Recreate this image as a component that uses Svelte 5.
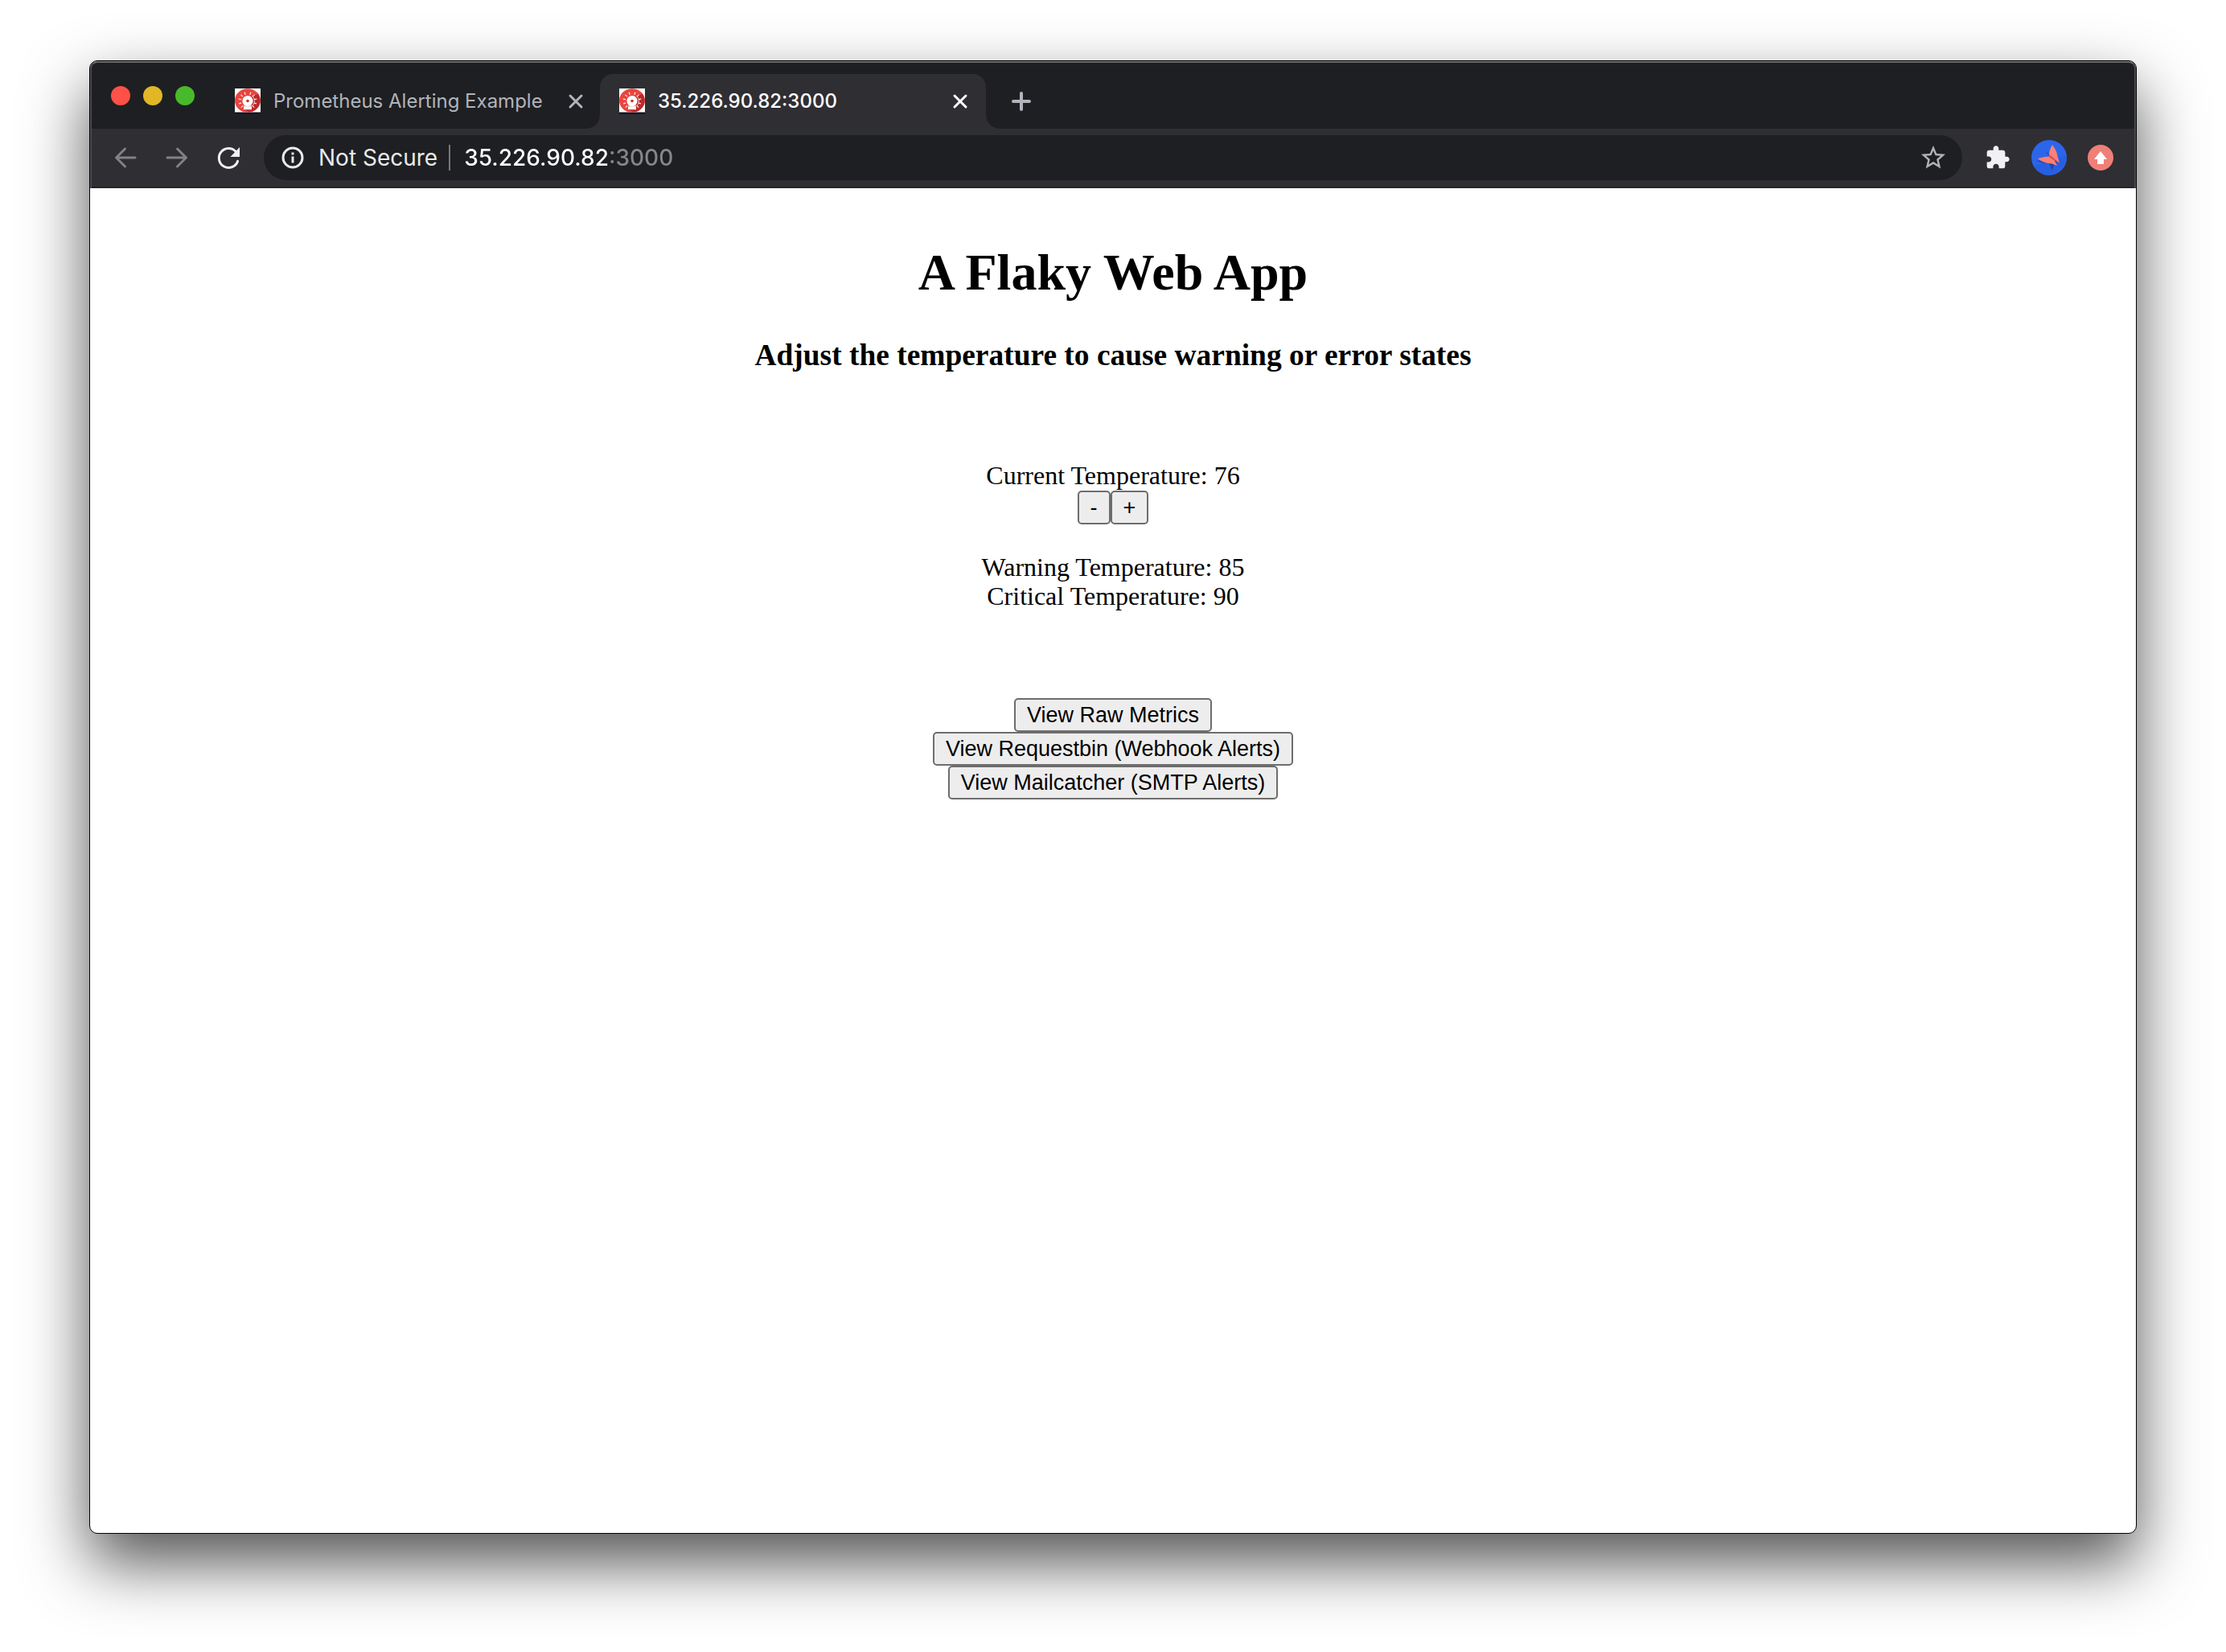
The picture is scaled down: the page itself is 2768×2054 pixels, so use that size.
<script>
  let temperature = $state(76);
  let address = $state('35.226.90.82:3000');
  const warning = 85;
  const critical = 90;
  const rays = [-135, -108, -78, -48, -20, 20, 48, 78, 108, 135];
</script>

{#snippet favicon()}
  <svg class="favicon" viewBox="0 0 32 32" aria-hidden="true">
    <rect width="32" height="32" fill="#14142a" />
    <rect width="32" height="29.5" fill="#fff" />
    <ellipse cx="16" cy="15" rx="16" ry="14.8" fill="#e8463f" />
    <path d="M21 9 L29 7 A16 14.8 0 0 1 18 29.6 L11 26 Z" fill="#b92a2c" />
    {#each rays as angle}
      <path d="M16 4.4v2.4" transform="rotate({angle} 16 15.5)" stroke="#ffe9e6" stroke-width="1.2" stroke-linecap="round" />
    {/each}
    <rect x="11" y="21" width="10" height="5.2" fill="#fff" />
    <path d="M10.5 21.8h11" stroke="#d9403b" stroke-width="0.7" />
    <path d="M21.500 9a8.500 8.500 0 0 1 0 13" fill="none" stroke="#ffe9e6" stroke-width="0.8" />
    <circle cx="16" cy="15.5" r="6.6" fill="#fff" />
    <circle cx="16" cy="15.5" r="1.8" fill="#c9302c" />
  </svg>
{/snippet}

{#snippet cross()}
  <svg width="24" height="24" viewBox="0 0 24 24" aria-hidden="true">
    <path d="M5 5 19 19M19 5 5 19" stroke="currentColor" stroke-width="3" stroke-linecap="round" />
  </svg>
{/snippet}

<div class="desktop">
  <div class="window">
    <header class="chrome">
      <div class="tabstrip">
        <div class="lights">
          <button class="light red" aria-label="Close window"></button>
          <button class="light yellow" aria-label="Minimize window"></button>
          <button class="light green" aria-label="Zoom window"></button>
        </div>
        <div class="tab">
          {@render favicon()}
          <span class="title">Prometheus Alerting Example</span>
          <button class="icon small" aria-label="Close tab">{@render cross()}</button>
        </div>
        <div class="tab active">
          {@render favicon()}
          <span class="title">35.226.90.82:3000</span>
          <button class="icon small" aria-label="Close tab">{@render cross()}</button>
        </div>
        <button class="icon newtab" aria-label="New tab">
          <svg width="40" height="40" viewBox="0 0 40 40" aria-hidden="true">
            <path d="M20 10v20M10 20h20" stroke="currentColor" stroke-width="4" stroke-linecap="round" />
          </svg>
        </button>
      </div>

      <div class="toolbar">
        <button class="icon dim" aria-label="Back">
          <svg width="40" height="40" viewBox="0 0 40 40" fill="none" aria-hidden="true">
            <path d="M32 20H9M19.5 9 8.5 20l11 11" stroke="currentColor" stroke-width="3" stroke-linecap="round" stroke-linejoin="round" />
          </svg>
        </button>
        <button class="icon dim" aria-label="Forward">
          <svg width="40" height="40" viewBox="0 0 40 40" fill="none" aria-hidden="true">
            <path d="M8 20h23M20.5 9l11 11-11 11" stroke="currentColor" stroke-width="3" stroke-linecap="round" stroke-linejoin="round" />
          </svg>
        </button>
        <button class="icon" aria-label="Reload">
          <svg width="40" height="40" viewBox="0 0 40 40" fill="none" aria-hidden="true">
            <path d="M31.6 24.4A12 12 0 1 1 29 12.2" stroke="currentColor" stroke-width="3" stroke-linecap="round" />
            <path d="M34 7v12H22.5z" fill="currentColor" />
          </svg>
        </button>

        <div class="omnibox">
          <svg width="40" height="40" viewBox="0 0 40 40" fill="none" aria-hidden="true">
            <circle cx="20" cy="20" r="12" stroke="currentColor" stroke-width="3" />
            <path d="M18.5 13.5h3v3h-3zM18.5 18.5h3v8h-3z" fill="currentColor" />
          </svg>
          <span class="secure">Not Secure</span>
          <span class="divider"></span>
          <input class="url" type="text" aria-label="Address" spellcheck="false" bind:value={address} />
          <button class="star" aria-label="Bookmark this page">
            <svg width="36" height="36" viewBox="0 0 24 24" fill="currentColor" aria-hidden="true">
              <path d="M22 9.24l-7.19-.62L12 2 9.19 8.63 2 9.24l5.46 4.73L5.82 21 12 17.27 18.18 21l-1.63-7.03L22 9.24zM12 15.4l-3.76 2.27 1-4.28-3.32-2.88 4.38-.38L12 6.1l1.71 4.04 4.38.38-3.32 2.88 1 4.28L12 15.4z" />
            </svg>
          </button>
        </div>

        <button class="icon" aria-label="Extensions">
          <svg width="32" height="32" viewBox="0 0 24 24" fill="currentColor" aria-hidden="true">
            <path d="M20.5 11H19V7c0-1.1-.9-2-2-2h-4V3.5C13 2.12 11.88 1 10.5 1S8 2.12 8 3.5V5H4c-1.1 0-1.99.9-1.99 2v3.8H3.5c1.49 0 2.7 1.21 2.7 2.7s-1.21 2.7-2.7 2.7H2V20c0 1.1.9 2 2 2h3.8v-1.5c0-1.49 1.21-2.7 2.7-2.7 1.49 0 2.7 1.21 2.7 2.7V22H17c1.1 0 2-.9 2-2v-4h1.5c1.38 0 2.5-1.12 2.5-2.5S21.88 11 20.5 11z" />
          </svg>
        </button>
        <button class="icon" aria-label="Profile">
          <svg width="44" height="44" viewBox="0 0 44 44" aria-hidden="true">
            <circle cx="22" cy="22" r="22" fill="#2b66ea" />
            <path d="M4 32 43 19A22 22 0 0 1 7 38z" fill="#275ee2" />
            <path d="M18 14l4 7-2 4-15 1 12 3 5 0 4 9 2-7 4-4z" fill="#1f479f" />
            <path d="M26 6Q32 14 32.500 20.500L35 28.500 29 25 21.500 22.500Q22 12 26 6z" fill="#fc817a" />
            <path d="M8 23.300Q16 20.500 22 20.800L28.500 25 32 32 25.500 29.500Q14 28.500 8 23.300z" fill="#fc7f77" />
            <path d="M22 18 26 21 35 28.500 28.500 25.500 22 21.500z" fill="#e04f4c" />
          </svg>
        </button>
        <button class="icon" aria-label="Update available">
          <svg width="32" height="32" viewBox="0 0 32 32" aria-hidden="true">
            <circle cx="16" cy="16" r="16" fill="#f07f78" />
            <path d="M16 8 24 18h-4v6h-8v-6H8z" fill="#fff" />
          </svg>
        </button>
      </div>
    </header>

    <main class="page">
      <h1>A Flaky Web App</h1>
      <h3>Adjust the temperature to cause warning or error states</h3>

      <section class="current">
        <p>Current Temperature: {temperature}</p>
        <div class="steps">
          <button class="push" aria-label="Decrease temperature" onclick={() => temperature--}>-</button>
          <button class="push" aria-label="Increase temperature" onclick={() => temperature++}>+</button>
        </div>
      </section>

      <section class="limits">
        <p>Warning Temperature: {warning}</p>
        <p>Critical Temperature: {critical}</p>
      </section>

      <nav class="links">
        <button class="push">View Raw Metrics</button>
        <button class="push">View Requestbin (Webhook Alerts)</button>
        <button class="push">View Mailcatcher (SMTP Alerts)</button>
      </nav>
    </main>
  </div>
</div>

<style>
  :global(body) {
    background: #fff;
  }

  .desktop {
    box-sizing: border-box;
    min-height: 100vh;
    padding: 75px 111px 147px;
    display: flex;
    flex-direction: column;
    overflow: hidden;
  }

  .window {
    flex: 1;
    display: flex;
    flex-direction: column;
    border: 1px solid #000;
    border-radius: 10px;
    background: #fff;
    box-shadow: 0 36px 80px rgba(0, 0, 0, 0.68);
  }

  .chrome {
    position: relative;
    border-radius: 9px 9px 0 0;
    background: #1e1f22;
    color: #f1f1f4;
    font-family: Inter, "Liberation Sans", sans-serif;
    overflow: hidden;
  }

  /* Light rim along the top and side edges of the title bar */
  .chrome::after {
    content: "";
    position: absolute;
    inset: 0;
    border: 2px solid #4a4a4d;
    border-top-color: #6a6b6c;
    border-bottom: 0;
    border-radius: 9px 9px 0 0;
    pointer-events: none;
  }

  button {
    margin: 0;
    padding: 0;
    border: 0;
    background: none;
    color: inherit;
    font: inherit;
  }

  .tabstrip {
    display: flex;
    align-items: flex-end;
    height: 84px;
  }

  .lights {
    display: flex;
    align-items: center;
    gap: 16px;
    height: 82px;
    padding: 2px 26px 0;
    align-self: flex-start;
  }

  .light {
    width: 24px;
    height: 24px;
    border-radius: 50%;
  }

  .red {
    background: #ff5148;
  }

  .yellow {
    background: #e1b725;
  }

  .green {
    background: #48b92a;
  }

  .tab {
    box-sizing: border-box;
    position: relative;
    display: flex;
    align-items: center;
    width: 478px;
    height: 68px;
    padding: 0 18px 0 24px;
    color: #b1b4bb;
    font-size: 24px;
    line-height: 32px;
  }

  .active {
    width: 480px;
    padding-right: 20px;
    border-radius: 16px 16px 0 0;
    background: #2f2e33;
    color: #fff;
    font-weight: 500;
  }

  /* Curved feet where the active tab meets the toolbar */
  .active::before,
  .active::after {
    content: "";
    position: absolute;
    bottom: 0;
    width: 16px;
    height: 16px;
  }

  .active::before {
    right: 100%;
    background: radial-gradient(circle at 0 0, transparent 15px, #2f2e33 16px);
  }

  .active::after {
    left: 100%;
    background: radial-gradient(circle at 100% 0, transparent 15px, #2f2e33 16px);
  }

  .favicon {
    flex: none;
    width: 32px;
    height: 32px;
  }

  .title {
    flex: 1;
    margin-left: 16px;
    white-space: nowrap;
  }

  .icon {
    flex: none;
    display: flex;
    align-items: center;
    justify-content: center;
    width: 40px;
    height: 40px;
  }

  .icon svg {
    flex: none;
  }

  .small {
    width: 24px;
    height: 24px;
  }

  .newtab {
    margin: 0 24px 14px;
    color: #b1b4bb;
  }

  .toolbar {
    display: flex;
    align-items: center;
    gap: 24px;
    height: 72px;
    padding: 0 24px;
    border-bottom: 2px solid #252529;
    background: #2f2e33;
  }

  .dim {
    color: #828286;
  }

  .omnibox {
    box-sizing: border-box;
    flex: 1;
    display: flex;
    align-items: center;
    height: 56px;
    padding: 0 18px 0 16px;
    border-radius: 28px;
    background: #1e1f22;
    color: #e9e9eb;
    font-size: 28px;
    line-height: 36px;
  }

  .secure {
    margin-left: 12px;
    white-space: nowrap;
  }

  .divider {
    width: 2px;
    height: 32px;
    margin: 0 17px 0 14px;
    background: #77787b;
  }

  /* The host is bright and the port is muted */
  .url {
    flex: 1;
    min-width: 0;
    height: 40px;
    margin: 0;
    padding: 0;
    border: 0;
    outline: 0;
    background: linear-gradient(90deg, #fff 180px, #85868a 180px);
    background-clip: text;
    -webkit-background-clip: text;
    color: transparent;
    caret-color: #fff;
    font: inherit;
    font-weight: 500;
  }

  .star {
    display: flex;
    color: #b3b3b5;
  }

  .page {
    display: flex;
    flex-direction: column;
    align-items: center;
    padding: 68px 16px 16px;
    color: #000;
    font-family: "Liberation Serif", serif;
    font-size: 32px;
    line-height: 36px;
    text-align: center;
  }

  h1 {
    margin: 0 0 44px;
    font-size: 64px;
    line-height: 74px;
  }

  h3 {
    margin: 0 0 109px;
    line-height: 44px;
  }

  p {
    margin: 0;
  }

  .steps {
    display: flex;
    justify-content: center;
    margin-top: 1px;
  }

  .limits {
    margin: 35px 0 109px;
  }

  .links {
    display: flex;
    flex-direction: column;
    align-items: center;
  }

  .push {
    padding: 4px 14px;
    border: 2px solid #6d6d6d;
    border-radius: 5px;
    background: #ededed;
    color: #000;
    font-family: "Liberation Sans", sans-serif;
    font-size: 27px;
    line-height: 30px;
  }
</style>
